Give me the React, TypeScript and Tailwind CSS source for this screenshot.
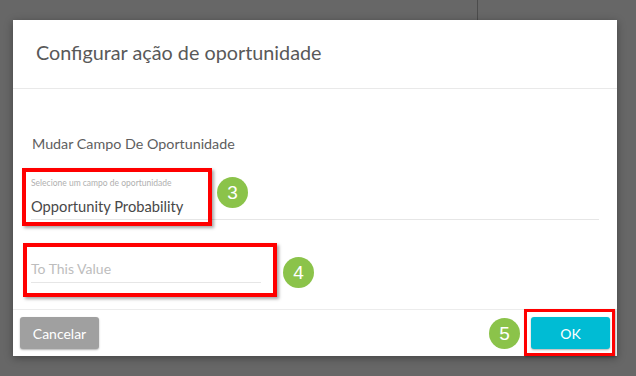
import React from "react"

const lato = { fontFamily: "Lato, 'Noto Sans', sans-serif" }

function Marker({ n, className }: { n: number; className: string }) {
  return (
    <div
      className={`absolute flex h-[31px] w-[31px] items-center justify-center rounded-full bg-[#8bc34a] text-[19px] leading-none text-white ${className}`}
      style={{ fontFamily: "'Liberation Sans', Arial, sans-serif" }}
    >
      {n}
    </div>
  )
}

export default function App() {
  return (
    <div className="relative h-[376px] w-[636px] overflow-hidden bg-[#676767] pl-[13px] pt-[20px]" style={lato}>
      <div className="absolute left-[477px] top-0 h-[20px] w-px bg-[#4c4c4c]" />

      <div className="relative flex h-[336px] w-[604px] flex-col bg-white shadow-[0_2px_8px_rgba(0,0,0,0.35)]">
        <div className="flex h-[69px] shrink-0 items-center border-b border-[#e9e9e9] px-[23px] pb-[2px]">
          <h2 className="text-[19.8px] font-normal text-[#595959]">Configurar ação de oportunidade</h2>
        </div>

        <div className="flex-1 px-[18px] pt-[44px]">
          <p className="px-[1px] text-[14.3px] text-[#5e5e5e]">Mudar Campo De Oportunidade</p>

          <div className="mt-[24px] border-b border-[#e6e6e6] pb-[3px]">
            <div className="text-[8.5px] leading-[10px] text-[#b0b0b0]">Selecione um campo de oportunidade</div>
            <div className="mt-[8px] text-[14.7px] leading-[20px] text-[#484848]">Opportunity Probability</div>
          </div>

          <div className="mt-[39px] w-[230px] border-b border-[#e6e6e6] pb-[3px]">
            <div className="text-[14px] leading-[20px] text-[#bdbdbd]">To This Value</div>
          </div>
        </div>

        <div className="flex h-[47px] shrink-0 items-center justify-between border-t border-[#ececec] px-[7px]">
          <button className="h-[32px] w-[79px] rounded-[3px] bg-[#a0a0a0] text-[14px] text-white shadow-[0_1px_2px_rgba(0,0,0,0.3)]">
            Cancelar
          </button>
          <button className="h-[32px] w-[79px] rounded-[3px] bg-[#00bcd4] text-[14px] text-white shadow-[0_1px_2px_rgba(0,0,0,0.3)]">
            OK
          </button>
        </div>

        <div className="absolute left-[9px] top-[148px] h-[58px] w-[190px] border-4 border-[#ff0000] shadow-[2px_2px_3px_rgba(0,0,0,0.35)]" />
        <div className="absolute left-[10px] top-[223px] h-[54px] w-[254px] border-4 border-[#ff0000] shadow-[2px_2px_3px_rgba(0,0,0,0.35)]" />
        <div className="absolute left-[511px] top-[289px] h-[47px] w-[91px] border-[3px] border-[#ff0000] shadow-[1px_1px_2px_rgba(0,0,0,0.3)]" />

        <Marker n={3} className="left-[204px] top-[157px]" />
        <Marker n={4} className="left-[270px] top-[237px]" />
        <Marker n={5} className="left-[476px] top-[298px]" />
      </div>
    </div>
  )
}
